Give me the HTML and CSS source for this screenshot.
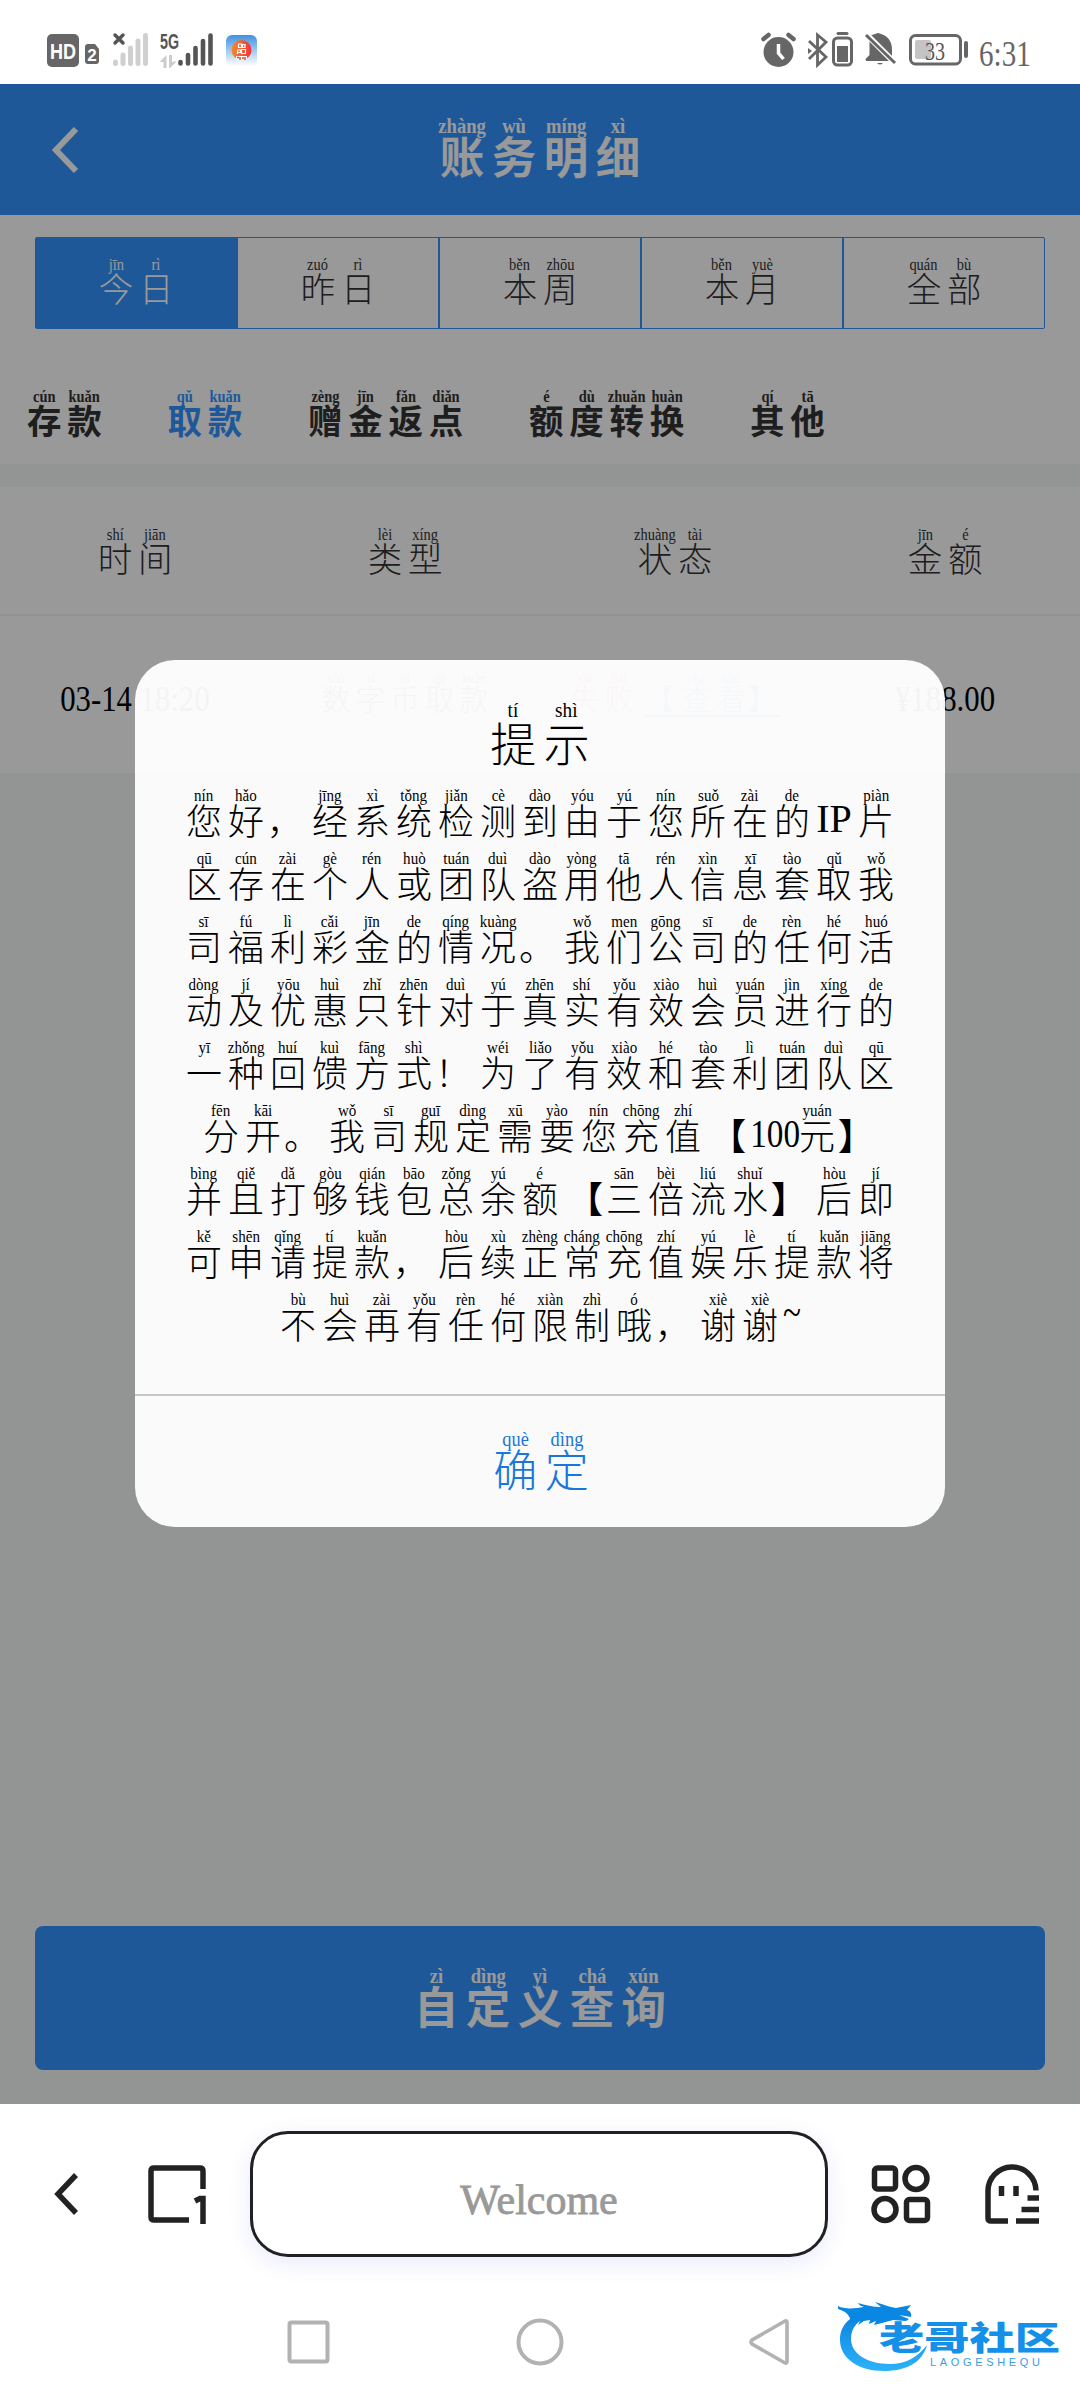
FILE: index.html
```html
<!DOCTYPE html>
<html lang="zh-CN">
<head>
  <meta charset="utf-8">
  <title>账务明细</title>
  <link rel="stylesheet" href="styles.css">
</head>
<body>
  <div class="statusbar">
    <svg class="status-left" width="240" height="44" viewBox="40 26 240 44">
      <rect x="47" y="34" width="32" height="33" rx="5" fill="#666"/>
      <text x="50" y="59" class="hd" textLength="26" lengthAdjust="spacingAndGlyphs">HD</text>
      <path d="M88 44h7l4 5v12q0 3-3 3h-8q-3 0-3-3V47q0-3 3-3z" fill="#666"/>
      <text x="92" y="61" class="sim" text-anchor="middle">2</text>
      <path d="M115 35l8 8M123 35l-8 8" stroke="#555" stroke-width="3.500" stroke-linecap="round"/>
      <path d="M115.500 62v1.500M123 55v8.500M130.500 48v15.500M138 41v22.500M145.500 35.500v28" stroke="#d0d0d0" stroke-width="5" stroke-linecap="round"/>
      <text x="160" y="49" class="net" textLength="19" lengthAdjust="spacingAndGlyphs">5G</text>
      <path d="M166.500 55v13h-3v-6h-4zM169 55h3v7l5-1-7 7h-1z" fill="#ccc"/>
      <path d="M180.500 62v1.500M188 55v8.500M195.500 48v15.500M203 41v22.500M210.500 35.500v28" stroke="#555" stroke-width="4.600" stroke-linecap="round"/>
      <defs>
        <linearGradient id="sky" x1="0" y1="0" x2="0" y2="1"><stop offset="0" stop-color="#4191e0"/><stop offset="1" stop-color="#fff"/></linearGradient>
        <linearGradient id="fire"><stop offset="0" stop-color="#f58a2c"/><stop offset="1" stop-color="#f0323c"/></linearGradient>
      </defs>
      <rect x="226" y="35" width="31" height="31" rx="6" fill="url(#sky)"/>
      <circle cx="241.500" cy="50" r="10" fill="url(#fire)"/>
      <path d="M238.500 44h3v3.500h-3zM242.500 44.500h2.500v3h-2.500zM237.500 54v-4h3v2.500h-3M241.500 49.500h4v4h-4z" fill="none" stroke="#fff" stroke-width="1.200"/>
      <path d="M236 56h11v3q-5 4-11 0z" fill="#fff"/>
      <path d="M237 57.500h2M240 57v3M242 58h2M245 57v3" stroke="#e5412f" stroke-width="1.500"/>
    </svg>
    <svg class="status-right" width="210" height="44" viewBox="758 26 210 44">
      <circle cx="778.500" cy="52" r="15" fill="#666"/>
      <path d="M778.500 44v9l5 6" fill="none" stroke="#fff" stroke-width="3.500"/>
      <path d="M763.500 39l5-4M793.500 39l-5-4" stroke="#666" stroke-width="4.500" stroke-linecap="round"/>
      <path d="M809 41l17 16-8.500 8V35l8.500 7-17 17" fill="none" stroke="#666" stroke-width="2.800"/>
      <path d="M808 48l4 3-4 3z" fill="#666"/>
      <rect x="833.500" y="38" width="18" height="27" rx="4" fill="none" stroke="#666" stroke-width="3"/>
      <path d="M837 46h11v16h-11z" fill="#666"/>
      <path d="M838 33.500h9" stroke="#666" stroke-width="3" stroke-linecap="round"/>
      <path d="M869 36q3-1 9-3 14 3 14 17v9h2v2h-28l-.500-2 4-4V42z" fill="#666"/>
      <path d="M866 34l31 31" stroke="#fff" stroke-width="6"/>
      <path d="M866 35l29 28" stroke="#666" stroke-width="3"/>
      <path d="M877 63h6q-3 3-6 0z" fill="#666"/>
      <rect x="910.500" y="35.500" width="50" height="28.500" rx="5" fill="none" stroke="#666" stroke-width="3"/>
      <rect x="915" y="40" width="16" height="19" rx="2" fill="#c4c4c4"/>
      <text x="925" y="60" class="charge" textLength="20" lengthAdjust="spacingAndGlyphs">33</text>
      <path d="M966 43v13" stroke="#666" stroke-width="4" stroke-linecap="round"/>
    </svg>
    <div class="clock">6:31</div>
  </div>

  <div class="page">
    <div class="navbar">
      <svg class="nav-back" width="28" height="50" viewBox="0 0 28 50"><path d="M24 4L4 25l20 21" fill="none" stroke="#fff" stroke-width="6"/></svg>
      <h1><ruby>账<rt>zhàng</rt></ruby><ruby>务<rt>wù</rt></ruby><ruby>明<rt>míng</rt></ruby><ruby>细<rt>xì</rt></ruby></h1>
    </div>

    <div class="filters">
      <div class="segments">
        <div class="segment active"><ruby>今<rt>jīn</rt></ruby><ruby>日<rt>rì</rt></ruby></div>
        <div class="segment"><ruby>昨<rt>zuó</rt></ruby><ruby>日<rt>rì</rt></ruby></div>
        <div class="segment"><ruby>本<rt>běn</rt></ruby><ruby>周<rt>zhōu</rt></ruby></div>
        <div class="segment"><ruby>本<rt>běn</rt></ruby><ruby>月<rt>yuè</rt></ruby></div>
        <div class="segment"><ruby>全<rt>quán</rt></ruby><ruby>部<rt>bù</rt></ruby></div>
      </div>
      <div class="tabs">
        <div class="tab"><ruby>存<rt>cún</rt></ruby><ruby>款<rt>kuǎn</rt></ruby></div>
        <div class="tab active"><ruby>取<rt>qǔ</rt></ruby><ruby>款<rt>kuǎn</rt></ruby></div>
        <div class="tab"><ruby>赠<rt>zèng</rt></ruby><ruby>金<rt>jīn</rt></ruby><ruby>返<rt>fǎn</rt></ruby><ruby>点<rt>diǎn</rt></ruby></div>
        <div class="tab"><ruby>额<rt>é</rt></ruby><ruby>度<rt>dù</rt></ruby><ruby>转<rt>zhuǎn</rt></ruby><ruby>换<rt>huàn</rt></ruby></div>
        <div class="tab"><ruby>其<rt>qí</rt></ruby><ruby>他<rt>tā</rt></ruby></div>
      </div>
    </div>

    <div class="table">
      <div class="row head">
        <div><ruby>时<rt>shí</rt></ruby><ruby>间<rt>jiān</rt></ruby></div>
        <div><ruby>类<rt>lèi</rt></ruby><ruby>型<rt>xíng</rt></ruby></div>
        <div><ruby>状<rt>zhuàng</rt></ruby><ruby>态<rt>tài</rt></ruby></div>
        <div><ruby>金<rt>jīn</rt></ruby><ruby>额<rt>é</rt></ruby></div>
      </div>
      <div class="row record">
        <div><span class="num">03-14 18:20</span></div>
        <div><ruby>数<rt>shù</rt></ruby><ruby>字<rt>zì</rt></ruby><ruby>币<rt>bì</rt></ruby><ruby>取<rt>qǔ</rt></ruby><ruby>款<rt>kuǎn</rt></ruby></div>
        <div class="failed"><ruby>失<rt>shī</rt></ruby><ruby>败<rt>bài</rt></ruby><span class="link"><i>【</i><ruby>查<rt>chá</rt></ruby><ruby>看<rt>kàn</rt></ruby><i>】</i></span></div>
        <div><span class="num">¥188.00</span></div>
      </div>
    </div>

    <div class="query"><ruby>自<rt>zì</rt></ruby><ruby>定<rt>dìng</rt></ruby><ruby>义<rt>yì</rt></ruby><ruby>查<rt>chá</rt></ruby><ruby>询<rt>xún</rt></ruby></div>

    <div class="overlay">
      <div class="dialog">
        <h2><ruby>提<rt>tí</rt></ruby><ruby>示<rt>shì</rt></ruby></h2>
        <div class="message">
          <p><ruby>您<rt>nín</rt></ruby><ruby>好<rt>hǎo</rt></ruby><i>，</i><ruby>经<rt>jīng</rt></ruby><ruby>系<rt>xì</rt></ruby><ruby>统<rt>tǒng</rt></ruby><ruby>检<rt>jiǎn</rt></ruby><ruby>测<rt>cè</rt></ruby><ruby>到<rt>dào</rt></ruby><ruby>由<rt>yóu</rt></ruby><ruby>于<rt>yú</rt></ruby><ruby>您<rt>nín</rt></ruby><ruby>所<rt>suǒ</rt></ruby><ruby>在<rt>zài</rt></ruby><ruby>的<rt>de</rt></ruby><b class="ip">IP</b><ruby>片<rt>piàn</rt></ruby></p>
          <p><ruby>区<rt>qū</rt></ruby><ruby>存<rt>cún</rt></ruby><ruby>在<rt>zài</rt></ruby><ruby>个<rt>gè</rt></ruby><ruby>人<rt>rén</rt></ruby><ruby>或<rt>huò</rt></ruby><ruby>团<rt>tuán</rt></ruby><ruby>队<rt>duì</rt></ruby><ruby>盗<rt>dào</rt></ruby><ruby>用<rt>yòng</rt></ruby><ruby>他<rt>tā</rt></ruby><ruby>人<rt>rén</rt></ruby><ruby>信<rt>xìn</rt></ruby><ruby>息<rt>xī</rt></ruby><ruby>套<rt>tào</rt></ruby><ruby>取<rt>qǔ</rt></ruby><ruby>我<rt>wǒ</rt></ruby></p>
          <p><ruby>司<rt>sī</rt></ruby><ruby>福<rt>fú</rt></ruby><ruby>利<rt>lì</rt></ruby><ruby>彩<rt>cǎi</rt></ruby><ruby>金<rt>jīn</rt></ruby><ruby>的<rt>de</rt></ruby><ruby>情<rt>qíng</rt></ruby><ruby>况<rt>kuàng</rt></ruby><i>。</i><ruby>我<rt>wǒ</rt></ruby><ruby>们<rt>men</rt></ruby><ruby>公<rt>gōng</rt></ruby><ruby>司<rt>sī</rt></ruby><ruby>的<rt>de</rt></ruby><ruby>任<rt>rèn</rt></ruby><ruby>何<rt>hé</rt></ruby><ruby>活<rt>huó</rt></ruby></p>
          <p><ruby>动<rt>dòng</rt></ruby><ruby>及<rt>jí</rt></ruby><ruby>优<rt>yōu</rt></ruby><ruby>惠<rt>huì</rt></ruby><ruby>只<rt>zhǐ</rt></ruby><ruby>针<rt>zhēn</rt></ruby><ruby>对<rt>duì</rt></ruby><ruby>于<rt>yú</rt></ruby><ruby>真<rt>zhēn</rt></ruby><ruby>实<rt>shí</rt></ruby><ruby>有<rt>yǒu</rt></ruby><ruby>效<rt>xiào</rt></ruby><ruby>会<rt>huì</rt></ruby><ruby>员<rt>yuán</rt></ruby><ruby>进<rt>jìn</rt></ruby><ruby>行<rt>xíng</rt></ruby><ruby>的<rt>de</rt></ruby></p>
          <p><ruby>一<rt>yī</rt></ruby><ruby>种<rt>zhǒng</rt></ruby><ruby>回<rt>huí</rt></ruby><ruby>馈<rt>kuì</rt></ruby><ruby>方<rt>fāng</rt></ruby><ruby>式<rt>shì</rt></ruby><i>！</i><ruby>为<rt>wéi</rt></ruby><ruby>了<rt>liǎo</rt></ruby><ruby>有<rt>yǒu</rt></ruby><ruby>效<rt>xiào</rt></ruby><ruby>和<rt>hé</rt></ruby><ruby>套<rt>tào</rt></ruby><ruby>利<rt>lì</rt></ruby><ruby>团<rt>tuán</rt></ruby><ruby>队<rt>duì</rt></ruby><ruby>区<rt>qū</rt></ruby></p>
          <p><ruby>分<rt>fēn</rt></ruby><ruby>开<rt>kāi</rt></ruby><i>。</i><ruby>我<rt>wǒ</rt></ruby><ruby>司<rt>sī</rt></ruby><ruby>规<rt>guī</rt></ruby><ruby>定<rt>dìng</rt></ruby><ruby>需<rt>xū</rt></ruby><ruby>要<rt>yào</rt></ruby><ruby>您<rt>nín</rt></ruby><ruby>充<rt>chōng</rt></ruby><ruby>值<rt>zhí</rt></ruby><i class="open">【</i><b>100</b><ruby>元<rt>yuán</rt></ruby><i class="close">】</i></p>
          <p><ruby>并<rt>bìng</rt></ruby><ruby>且<rt>qiě</rt></ruby><ruby>打<rt>dǎ</rt></ruby><ruby>够<rt>gòu</rt></ruby><ruby>钱<rt>qián</rt></ruby><ruby>包<rt>bāo</rt></ruby><ruby>总<rt>zǒng</rt></ruby><ruby>余<rt>yú</rt></ruby><ruby>额<rt>é</rt></ruby><i class="open">【</i><ruby>三<rt>sān</rt></ruby><ruby>倍<rt>bèi</rt></ruby><ruby>流<rt>liú</rt></ruby><ruby>水<rt>shuǐ</rt></ruby><i class="close">】</i><ruby>后<rt>hòu</rt></ruby><ruby>即<rt>jí</rt></ruby></p>
          <p><ruby>可<rt>kě</rt></ruby><ruby>申<rt>shēn</rt></ruby><ruby>请<rt>qǐng</rt></ruby><ruby>提<rt>tí</rt></ruby><ruby>款<rt>kuǎn</rt></ruby><i>，</i><ruby>后<rt>hòu</rt></ruby><ruby>续<rt>xù</rt></ruby><ruby>正<rt>zhèng</rt></ruby><ruby>常<rt>cháng</rt></ruby><ruby>充<rt>chōng</rt></ruby><ruby>值<rt>zhí</rt></ruby><ruby>娱<rt>yú</rt></ruby><ruby>乐<rt>lè</rt></ruby><ruby>提<rt>tí</rt></ruby><ruby>款<rt>kuǎn</rt></ruby><ruby>将<rt>jiāng</rt></ruby></p>
          <p><ruby>不<rt>bù</rt></ruby><ruby>会<rt>huì</rt></ruby><ruby>再<rt>zài</rt></ruby><ruby>有<rt>yǒu</rt></ruby><ruby>任<rt>rèn</rt></ruby><ruby>何<rt>hé</rt></ruby><ruby>限<rt>xiàn</rt></ruby><ruby>制<rt>zhì</rt></ruby><ruby>哦<rt>ó</rt></ruby><i>，</i><ruby>谢<rt>xiè</rt></ruby><ruby>谢<rt>xiè</rt></ruby><b class="tilde">~</b></p>
        </div>
        <div class="confirm"><ruby>确<rt>què</rt></ruby><ruby>定<rt>dìng</rt></ruby></div>
      </div>
    </div>
  </div>

  <div class="browserbar">
    <svg width="28" height="46" viewBox="0 0 28 46"><path d="M23 4L5 23l18 19" fill="none" stroke="#222" stroke-width="5.500"/></svg>
    <svg class="pages" width="58" height="60" viewBox="0 0 58 60">
      <path d="M41 56H6q-3 0-3-3V7q0-3 3-3h46q3 0 3 3v18" fill="none" stroke="#222" stroke-width="5.500"/>
      <path d="M47 37l5-2.500h3V60" fill="none" stroke="#222" stroke-width="5.500"/>
    </svg>
    <div class="address">Welcome</div>
    <svg class="apps" width="60" height="60" viewBox="0 0 60 60" fill="none" stroke="#222" stroke-width="5.500">
      <rect x="3.500" y="4" width="21" height="21" rx="3"/>
      <circle cx="45" cy="14.500" r="11"/>
      <circle cx="14" cy="45.500" r="11"/>
      <rect x="35.500" y="35.500" width="21" height="21" rx="3"/>
    </svg>
    <svg class="ghost" width="56" height="60" viewBox="0 0 56 60" fill="none" stroke="#222" stroke-width="5.500">
      <path d="M24 57H7q-3 0-3-3V27.500a24 24 0 0 1 48-1"/>
      <path d="M17.500 22v10M32 22v10M43.500 34H55M37.500 45.500H55M32 57h23"/>
    </svg>
  </div>

  <div class="systembar">
    <svg width="44" height="48" viewBox="0 0 44 48"><rect x="2.500" y="4.500" width="38" height="39" rx="2" fill="none" stroke="#b2b2b2" stroke-width="4"/></svg>
    <svg class="home" width="48" height="48" viewBox="0 0 48 48"><circle cx="24" cy="24" r="21.500" fill="none" stroke="#b2b2b2" stroke-width="4"/></svg>
    <svg class="back" width="44" height="48" viewBox="0 0 44 48"><path d="M38 3L5 22q-2 2 0 4l33 19q2 1 2-2V5q0-3-2-2z" fill="none" stroke="#b2b2b2" stroke-width="3.600"/></svg>
    <svg class="watermark" width="240" height="90" viewBox="830 2290 240 90">
      <defs>
        <linearGradient id="wave" x1="0" y1="0" x2="0" y2="1"><stop offset="0" stop-color="#0a7fe0"/><stop offset="1" stop-color="#2bb3f8"/></linearGradient>
      </defs>
      <path d="M872 2311c-22 3-32 14-32 29 0 18 18 31 44 31 22 0 38-8 43-26-9 12-21 19-37 19-24 0-39-11-39-25 0-12 7-19 20-23z" fill="url(#wave)"/>
      <path d="M838 2306c8 4 18 2 26 1-3-1-5-2-6-4 7 2 15 4 23 4l-6-5c8 2 14 5 21 6l15-3-4 5c3 1 5 3 4 7l-12-2 10 4-3 2-13-1-11 3-8 2 2-4-7 3 1-4-6 1-6 4 2-4-9 1c-1-5-3-10-13-13z" fill="#0a86e3"/>
      <text x="879" y="2350" class="brand" textLength="181" lengthAdjust="spacingAndGlyphs">老哥社区</text>
      <text x="930" y="2366" class="brand-en" textLength="110">LAOGESHEQU</text>
    </svg>
  </div>
</body>
</html>
```

FILE: styles.css
```css
* {
  box-sizing: border-box;
}

body {
  margin: 0;
  width: 1080px;
  height: 2400px;
  overflow: hidden;
  background-color: #ffffff;
  font-family: "Liberation Serif", "Noto Sans CJK SC", serif;
  font-weight: 300;
}

svg {
  display: block;
  flex: none;
}

h1, h2, p {
  margin: 0;
  font-weight: inherit;
}

/* one character with its reading on top */
ruby {
  display: inline-flex;
  flex-direction: column-reverse;
  align-items: center;
  width: 1.167em;
  line-height: 1em;
  font-family: "Noto Sans CJK SC", sans-serif;
}

rt {
  margin-bottom: -0.090em;
  font-family: "Liberation Serif", serif;
  font-size: 0.460em;
  line-height: 0.830em;
  white-space: nowrap;
  transform: scaleX(0.910);
}

i {
  width: 1.167em;
  font-style: normal;
  line-height: 1em;
  font-family: "Noto Sans CJK SC", sans-serif;
}

/* status bar */
.statusbar {
  display: flex;
  height: 84px;
  padding: 26px 0 0 40px;
}

.status-right {
  margin-left: 478px;
}

.clock {
  width: 60px;
  margin-left: 6px;
  color: #666666;
  font-size: 35px;
  line-height: 58px;
  transform: scaleX(0.830);
}

.hd, .sim, .net {
  font-family: "Liberation Sans", sans-serif;
  font-weight: bold;
  fill: #ffffff;
}

.hd {
  font-size: 22px;
}

.sim {
  font-size: 17px;
}

.net {
  font-size: 22px;
  fill: #555555;
}

.charge {
  font-size: 26px;
  fill: #555555;
}

/* page */
.page {
  position: relative;
  display: flex;
  flex-direction: column;
  height: 2020px;
  background-color: #f3f8f5;
  color: #333333;
}

.navbar {
  display: flex;
  align-items: center;
  height: 131px;
  padding-left: 52px;
  background-color: #3293ff;
  color: #ffffff;
}

h1 {
  display: flex;
  justify-content: center;
  width: 920px;
  padding-bottom: 4px;
  font-size: 44.500px;
  font-weight: bold;
}

.filters {
  height: 249px;
  padding: 22px 35px 0;
  background-color: #ffffff;
}

.segments {
  display: flex;
  height: 92px;
  border: 1px solid #3293ff;
  border-radius: 2px;
}

.segment {
  display: flex;
  flex: 1;
  justify-content: center;
  align-items: flex-start;
  padding-top: 20px;
  font-size: 34.500px;
}

.segment + .segment {
  border-left: 2px solid #3293ff;
}

.segment.active {
  background-color: #3293ff;
  color: #ffffff;
}

.tabs {
  display: flex;
  gap: 60px;
  margin: 61px 0 0 -11px;
  font-size: 34.500px;
  font-weight: bold;
}

.tab {
  display: flex;
}

.tab.active {
  color: #3293ff;
}

.table {
  margin-top: 23px;
  background-color: #ffffff;
}

.row {
  display: grid;
  grid-template-columns: repeat(4, 270px);
}

.row > div {
  display: flex;
  justify-content: center;
  align-items: flex-start;
}

.head {
  height: 129px;
  padding-top: 41px;
  border-bottom: 2px solid #f1f3f5;
  font-size: 34.500px;
}

.record {
  height: 157px;
  padding-top: 57px;
  font-size: 29.500px;
}

.num {
  width: 180px;
  margin: 0 -20px;
  font-size: 35px;
  line-height: 54px;
  text-align: center;
  color: #000000;
  transform: scaleX(0.880);
}

.failed {
  color: #ff4444;
}

.link {
  display: flex;
  align-items: flex-end;
  margin-left: 8px;
  padding-bottom: 2px;
  border-bottom: 2px solid #3293ff;
  color: #3293ff;
}

.query {
  display: flex;
  justify-content: center;
  align-items: flex-start;
  width: 1010px;
  height: 144px;
  margin: auto auto 34px;
  padding-top: 42px;
  border-radius: 8px;
  background-color: #3293ff;
  color: #ffffff;
  font-size: 44.500px;
  font-weight: bold;
}

/* dialog */
.overlay {
  position: absolute;
  inset: 0;
  display: flex;
  justify-content: center;
  align-items: flex-start;
  padding-top: 576px;
  background-color: rgba(0, 0, 0, 0.4);
}

.dialog {
  width: 810px;
  height: 867px;
  border-radius: 40px;
  background-color: rgba(255, 255, 255, 0.955);
  color: #000000;
}

h2 {
  display: flex;
  justify-content: center;
  height: 104px;
  padding-top: 44px;
  font-size: 46px;
}

.message {
  height: 632px;
  padding-top: 24px;
  border-bottom: 2px solid #c6c6c6;
  font-size: 36px;
}

.message p {
  display: flex;
  justify-content: center;
  align-items: flex-end;
  height: 49px;
  margin-bottom: 14px;
}

.message .open,
.message .close {
  font-weight: bold;
}

.message .open {
  text-align: right;
}

.message b {
  width: 50px;
  font-size: 40px;
  font-weight: normal;
  line-height: 36px;
  text-align: center;
  transform: scaleX(0.830);
}

.message .ip {
  width: 42px;
  transform: none;
}

.message .tilde {
  width: 22px;
  line-height: 56px;
}

.confirm {
  display: flex;
  justify-content: center;
  padding: 35px 0 0 2px;
  color: #1877d8;
  font-size: 44px;
}

/* browser toolbar */
.browserbar {
  display: flex;
  align-items: center;
  height: 180px;
  padding: 0 0 1px 53px;
}

.pages {
  margin-left: 67px;
}

.address {
  flex: none;
  width: 578px;
  height: 126px;
  margin-left: 44px;
  border: 3px solid #202124;
  border-radius: 38px;
  box-shadow: 0 6px 22px rgba(70, 80, 220, 0.120);
  color: #999999;
  font-size: 42px;
  line-height: 133px;
  text-align: center;
  -webkit-text-stroke: 0.800px #999999;
}

.apps {
  margin-left: 43px;
}

.ghost {
  margin-left: 53px;
}

/* android navigation */
.systembar {
  display: flex;
  height: 116px;
  padding: 34px 0 0 287px;
}

.home {
  margin-left: 185px;
}

.back {
  margin-left: 183px;
}

.watermark {
  margin: -28px 0 0 39px;
}

.brand {
  font-family: "Noto Sans CJK SC", sans-serif;
  font-size: 33px;
  font-weight: 900;
  fill: #1590e8;
}

.brand-en {
  font-family: "Liberation Sans", sans-serif;
  font-size: 11px;
  fill: #3a9de8;
}
```
